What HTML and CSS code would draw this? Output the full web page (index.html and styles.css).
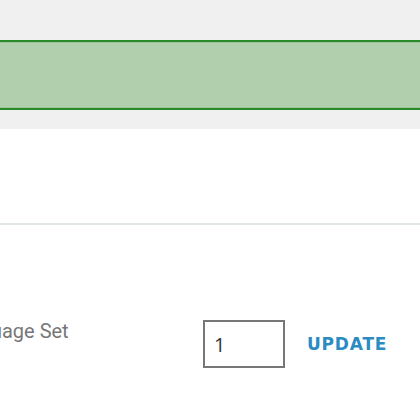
FILE: index.html
```html
<!DOCTYPE html>
<html>
    <head>
        <meta charset="UTF-8">
        <title>Language Set</title>
        <link rel="stylesheet" href="styles.css">
    </head>
    <body>
        <div class="top">
            <div class="notice"></div>
        </div>
        <div class="blank"></div>
        <div class="row">
            <span class="label">Language Set</span>
            <input class="qty" type="text" value="1">
            <a class="update" href="#">UPDATE</a>
        </div>
    </body>
</html>
```

FILE: styles.css
```css
body{margin:0;background:#fff;font-family:Roboto,"Liberation Sans",sans-serif;}
.top{
    height: 89px;
    padding-top: 40px;
    background: #f0f0f0;
}
.notice{
    height: 66px;
    border-top: 2px solid #2a8a2a;
    border-bottom: 2px solid #2a8a2a;
    background: #b1cfad;
    box-shadow: inset 0 1px 0 #9fc59b, inset 0 -1px 0 #9fc59b;
}
.blank{
    height: 94px;
    border-bottom: 2px solid #e1e6e8;
}
.row{
    display: flex;
    align-items: center;
    padding-top: 95px;
    margin-left: -53px;
}
.label{
    width: 256px;
    font-size: 20px;
    color: #777;
    margin-top: -26px;
}
.qty{
    box-sizing: border-box;
    width: 82px;
    height: 48px;
    border: 2px solid #777;
    padding: 0 9px;
    font-family: "Open Sans",sans-serif;
    font-size: 20px;
    color: #333;
    outline: none;
}
.update{
    margin-left: 22px;
    font-family: "DejaVu Sans",sans-serif;
    font-weight: 700;
    font-size: 17px;
    letter-spacing: 0.8px;
    color: #2b8bc3;
    text-decoration: none;
}
```
